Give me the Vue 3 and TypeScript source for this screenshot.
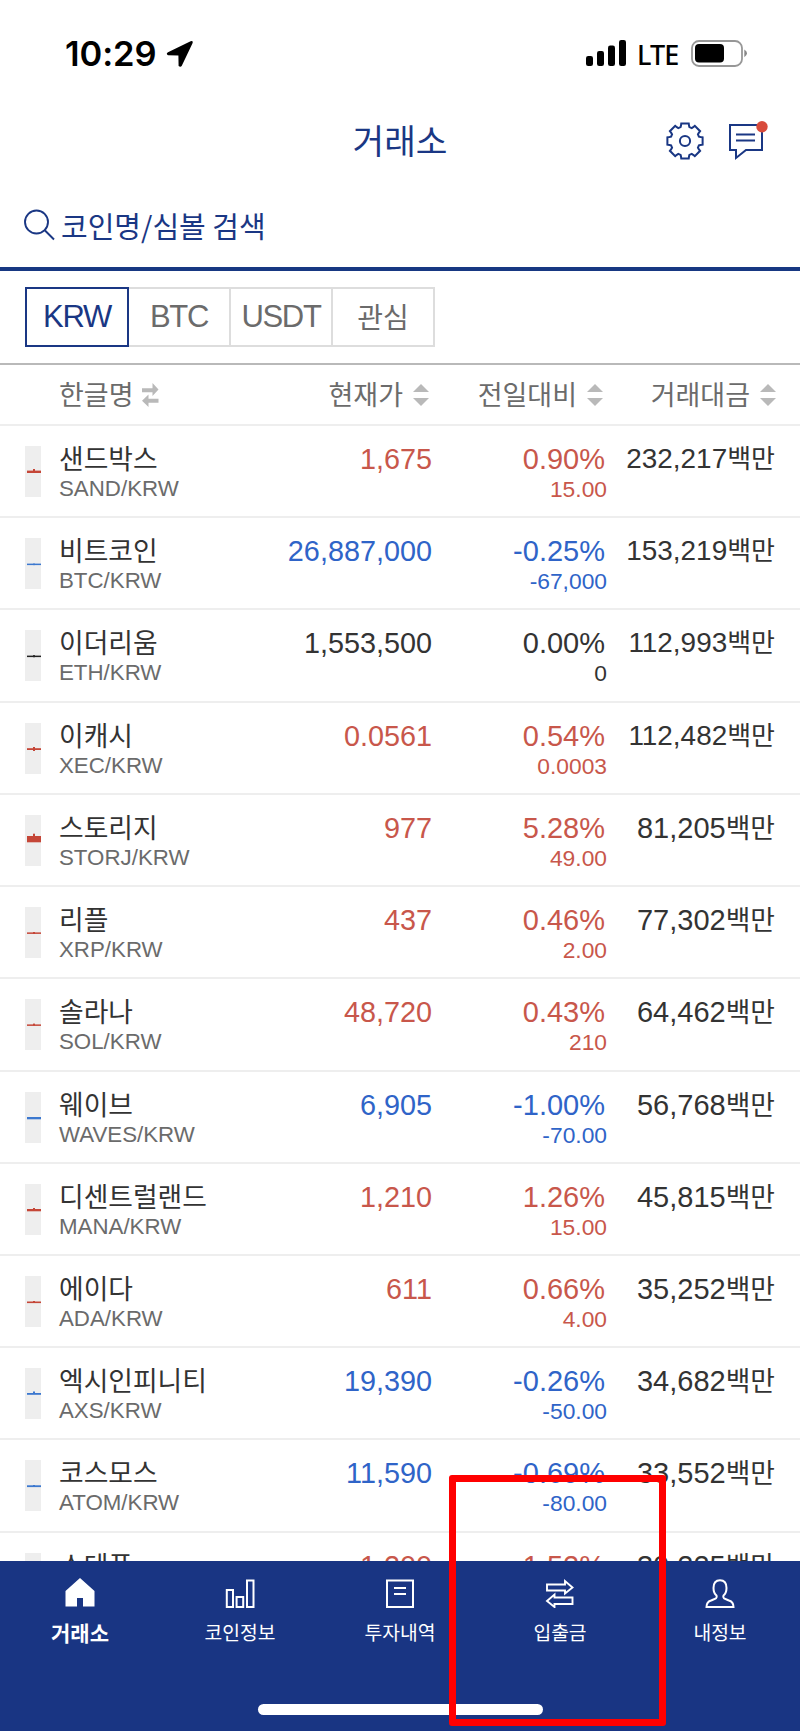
<script setup lang="ts">
type Trend = 'up' | 'down' | 'flat'

interface Coin {
  name: string
  symbol: string
  price: string
  rate: string
  diff: string
  volume: string
  trend: Trend
  // body top, body height, wick top, wick height
  candle: [number, number, number, number]
}

const coins: Coin[] = [
  { name: '샌드박스', symbol: 'SAND', price: '1,675', rate: '0.90%', diff: '15.00', volume: '232,217', trend: 'up', candle: [24.6, 2.4, 23, 2] },
  { name: '비트코인', symbol: 'BTC', price: '26,887,000', rate: '-0.25%', diff: '-67,000', volume: '153,219', trend: 'down', candle: [25.6, 1.5, 25.6, 1.5] },
  { name: '이더리움', symbol: 'ETH', price: '1,553,500', rate: '0.00%', diff: '0', volume: '112,993', trend: 'flat', candle: [25.6, 1.5, 25.2, 2] },
  { name: '이캐시', symbol: 'XEC', price: '0.0561', rate: '0.54%', diff: '0.0003', volume: '112,482', trend: 'up', candle: [25.2, 1.8, 24, 4] },
  { name: '스토리지', symbol: 'STORJ', price: '977', rate: '5.28%', diff: '49.00', volume: '81,205', trend: 'up', candle: [21, 6.3, 18.7, 3] },
  { name: '리플', symbol: 'XRP', price: '437', rate: '0.46%', diff: '2.00', volume: '77,302', trend: 'up', candle: [25.4, 1.5, 25, 2] },
  { name: '솔라나', symbol: 'SOL', price: '48,720', rate: '0.43%', diff: '210', volume: '64,462', trend: 'up', candle: [25.4, 1.5, 24.6, 2] },
  { name: '웨이브', symbol: 'WAVES', price: '6,905', rate: '-1.00%', diff: '-70.00', volume: '56,768', trend: 'down', candle: [25, 2.3, 25, 2] },
  { name: '디센트럴랜드', symbol: 'MANA', price: '1,210', rate: '1.26%', diff: '15.00', volume: '45,815', trend: 'up', candle: [25, 2.3, 24, 2] },
  { name: '에이다', symbol: 'ADA', price: '611', rate: '0.66%', diff: '4.00', volume: '35,252', trend: 'up', candle: [25.5, 1.6, 25, 2] },
  { name: '엑시인피니티', symbol: 'AXS', price: '19,390', rate: '-0.26%', diff: '-50.00', volume: '34,682', trend: 'down', candle: [25, 1.8, 23.5, 2] },
  { name: '코스모스', symbol: 'ATOM', price: '11,590', rate: '-0.69%', diff: '-80.00', volume: '33,552', trend: 'down', candle: [25.3, 1.8, 25, 2] },
  { name: '스테픈', symbol: 'GMT', price: '1,200', rate: '1.52%', diff: '18.00', volume: '30,225', trend: 'up', candle: [25, 2, 24, 2] },
]

const tabs = ['KRW', 'BTC', 'USDT', '관심']
const columns = [
  { key: 'price', label: '현재가' },
  { key: 'rate', label: '전일대비' },
  { key: 'volume', label: '거래대금' },
]
const navItems = [
  { icon: 'home', label: '거래소' },
  { icon: 'chart', label: '코인정보' },
  { icon: 'doc', label: '투자내역' },
  { icon: 'transfer', label: '입출금' },
  { icon: 'user', label: '내정보' },
]

const tooth = (angle: number): string => {
  const point = (radius: number, offset: number): string => {
    const a = ((angle + offset) * Math.PI) / 180
    return `${(19 + radius * Math.sin(a)).toFixed(2)} ${(19 - radius * Math.cos(a)).toFixed(2)}`
  }
  return `${point(14.6, -17.5)} L${point(16, -14.5)} L${point(18, -12)} L${point(18, 12)} L${point(16, 14.5)} L${point(14.6, 17.5)}`
}
const gearPath = `M${[0, 45, 90, 135, 180, 225, 270, 315].map(tooth).join(' L')} Z`
</script>

<template>
  <div class="screen">
    <div class="status">
      <span class="time">10:29</span>
      <svg class="location" width="28" height="28" viewBox="0 0 28 28">
        <path d="M2 12.2 24.6 1.2Q27.6.4 26.4 3.6L15.8 25.8Q14.6 27.6 12.6 26L12.4 15.6 2 15.2Q-.4 14 2 12.2Z" fill="#000" />
      </svg>
      <svg class="signal" width="41" height="27" viewBox="0 0 41 27">
        <rect x="0" y="16" width="7" height="10" rx="2.2" />
        <rect x="11" y="11" width="7" height="15" rx="2.2" />
        <rect x="22" y="5.5" width="7" height="20.500" rx="2.2" />
        <rect x="33" y="0" width="7" height="26" rx="2.2" />
      </svg>
      <span class="lte">LTE</span>
      <svg class="battery" width="58" height="27" viewBox="0 0 58 27">
        <rect x="1" y="1" width="50" height="25" rx="7" fill="none" stroke="#979797" stroke-width="1.8" />
        <rect x="4" y="4" width="29" height="18.500" rx="4" />
        <path d="M53.300 9.500Q56 11 56 13.300T53.300 17.200Z" fill="#888" />
      </svg>
    </div>

    <header class="top">
      <h1>거래소</h1>
      <div class="actions">
        <svg width="38" height="38" viewBox="0 0 38 38" fill="none" stroke="#1a3784" stroke-width="2">
          <path :d="gearPath" />
          <circle cx="19" cy="19" r="5.100" />
        </svg>
        <svg width="40" height="40" viewBox="0 0 40 40" fill="none" stroke="#1a3784" stroke-width="2">
          <path d="M2 4H34V29H18L8 37V29H2Z" />
          <path d="M8 13.500H27M8 19.500H27" />
          <circle cx="34" cy="5.800" r="5.700" fill="#d84b3c" stroke="none" />
        </svg>
      </div>
    </header>

    <div class="search">
      <svg width="32" height="32" viewBox="0 0 32 32" fill="none" stroke="#1a3784" stroke-width="1.9">
        <circle cx="12.500" cy="13" r="11.500" />
        <path d="M20.500 21 30 30.500" />
      </svg>
      <span>코인명/심볼 검색</span>
    </div>

    <div class="tabs">
      <div v-for="(tab, i) in tabs" :key="tab" class="tab" :class="{ active: i === 0 }"><span>{{ tab }}</span></div>
    </div>

    <div class="row thead">
      <div class="label korean">
        <span>한글명</span>
        <svg width="17" height="24" viewBox="0 0 17 24" fill="#b9b9b9">
          <path d="M0 5.200H10.500V0L16.500 6.500 10.500 13V9.200H0ZM16.500 15.800H6.500V11.500L0 17.800 6.500 24V19.800H16.500Z" />
        </svg>
      </div>
      <div v-for="col in columns" :key="col.key" class="label" :class="col.key">
        <span>{{ col.label }}</span>
        <svg width="16" height="22" viewBox="0 0 16 22" fill="#b9b9b9"><path d="M0 8 8 0 16 8ZM0 14H16L8 22Z" /></svg>
      </div>
    </div>

    <main class="list">
      <div v-for="coin in coins" :key="coin.symbol" class="row coin" :class="coin.trend">
        <svg class="candle" width="16" height="51" viewBox="0 0 16 51">
          <rect width="16" height="51" fill="#eee" />
          <rect x="2" :y="coin.candle[0]" width="14" :height="coin.candle[1]" />
          <rect x="8" :y="coin.candle[2]" width="2" :height="coin.candle[3]" />
        </svg>
        <div class="name"><strong>{{ coin.name }}</strong><small>{{ coin.symbol }}/KRW</small></div>
        <div class="price">{{ coin.price }}</div>
        <div class="rate"><b>{{ coin.rate }}</b><small>{{ coin.diff }}</small></div>
        <div class="volume" :class="{ tight: coin.volume.length > 6 }">{{ coin.volume }}<span>백만</span></div>
      </div>
    </main>

    <nav class="nav">
      <div v-for="(item, i) in navItems" :key="item.icon" class="item" :class="{ current: i === 0 }">
        <svg width="30" height="30" viewBox="0 0 30 30" fill="none" stroke="#fff" stroke-width="2">
          <path v-if="item.icon === 'home'" d="M15 0 29.500 13V28.500H18V20H12V28.500H.500V13Z" fill="#fff" stroke="none" />
          <path v-else-if="item.icon === 'chart'" d="M1.800 12H8V29H1.800ZM11.600 19H18.200V29H11.600ZM22 2.500H28.500V29H22Z" />
          <path v-else-if="item.icon === 'doc'" d="M2 2.500H28V29H2ZM9 10H21M9 16H21" />
          <path v-else-if="item.icon === 'transfer'" d="M2 6.500H20V3L27.500 9.500 20 15.500V12.500H2ZM27.500 19.500H9.500V16.500L2 23 9.500 29V26H27.500Z" stroke-width="1.900" />
          <path v-else d="M15 2.200C10.500 2.200 8.500 5.500 8.500 10 8.500 13.500 9.500 15.800 11.500 17.500 12.800 20.500 9.500 21 6 22.500 3 23.500 1.500 25.500 1.500 29H28.500C28.500 25.500 27 23.500 24 22.500 20.500 21 17.200 20.500 18.500 17.500 20.500 15.800 21.500 13.500 21.500 10 21.500 5.500 19.500 2.200 15 2.200Z" />
        </svg>
        <span>{{ item.label }}</span>
      </div>
      <div class="indicator"></div>
    </nav>
    <div class="highlight"></div>
  </div>
</template>

<style>
body {
  margin: 0;
}
</style>

<style scoped>
.screen {
  position: relative;
  box-sizing: border-box;
  width: 800px;
  height: 1731px;
  overflow: hidden;
  display: flex;
  flex-direction: column;
  background: #fff;
  color: #333;
  font-family: "Liberation Sans", "Noto Sans CJK KR", sans-serif;
}
svg {
  display: block;
  flex: none;
}
.status {
  height: 100px;
  box-sizing: border-box;
  padding: 7px 51px 0 65px;
  display: flex;
  align-items: center;
  flex: none;
  color: #000;
}
.time {
  width: 101px;
  font: 600 34.500px/40px Inter, sans-serif;
  letter-spacing: -0.1px;
}
.signal {
  margin-left: auto;
}
.lte {
  margin: 2px 0 0 10.500px;
  width: 54px;
  font: 500 27px/32px "Noto Sans", sans-serif;
  letter-spacing: -0.900px;
}
.top {
  height: 82px;
  flex: none;
  display: grid;
  grid-template-columns: 1fr auto 1fr;
  align-items: center;
  color: #1a3784;
}
h1 {
  grid-column: 2;
  margin: 0;
  padding-bottom: 4px;
  font: 400 34.400px/50px "Noto Sans CJK KR", sans-serif;
}
.actions {
  display: flex;
  gap: 24px;
  justify-self: end;
  align-items: center;
  padding-right: 32px;
}
.search {
  height: 89px;
  box-sizing: border-box;
  flex: none;
  border-bottom: 4px solid #173882;
  padding: 0 24px;
  display: flex;
  align-items: center;
  gap: 5px;
  color: #1a3784;
  font: 400 29px/40px "Noto Sans CJK KR", sans-serif;
}
.tabs {
  height: 94px;
  box-sizing: border-box;
  flex: none;
  border-bottom: 2px solid #b9b9b9;
  padding: 16px 25px;
  display: flex;
}
.tab {
  width: 102px;
  height: 60px;
  box-sizing: border-box;
  border: 2px solid #ddd;
  border-left: 0;
  display: flex;
  align-items: center;
  justify-content: center;
  font-size: 31px;
  letter-spacing: -1.300px;
  color: #6b6b6b;
}
.tab:last-child {
  font-size: 28px;
  letter-spacing: 0;
  padding-bottom: 3px;
}
.tab.active {
  width: 104px;
  border: 2px solid #1a3784;
  color: #1a3784;
}
.row {
  display: grid;
  grid-template-columns: 34px 200px 173px 175px 168px;
  padding: 0 25px;
  box-sizing: border-box;
  border-bottom: 2px solid #eee;
  flex: none;
}
.thead {
  height: 61px;
  display: flex;
  align-items: center;
  padding: 0 24px 0 59px;
  font: 400 27px/40px "Noto Sans CJK KR", sans-serif;
  color: #6b6b6b;
}
.label {
  display: flex;
  align-items: center;
  gap: 10px;
}
.label span {
  padding-bottom: 2px;
}
.label.korean {
  gap: 8px;
}
.label.price {
  margin-left: auto;
}
.label.rate {
  width: 174px;
  justify-content: flex-end;
}
.label.volume {
  width: 173px;
  justify-content: flex-end;
}
.list {
  flex: 1;
  min-height: 0;
  overflow: hidden;
}
.coin {
  height: 92.220px;
}
.candle {
  margin-top: 20px;
}
.name {
  display: flex;
  flex-direction: column;
  padding-top: 13px;
}
.name strong {
  font: 400 26.800px/38px "Noto Sans CJK KR", sans-serif;
  color: #333;
}
small {
  font-size: 22.800px;
  line-height: 24px;
}
.name small {
  font-size: 22.300px;
  color: #6b6b6b;
}
.price,
.rate {
  text-align: right;
  font-size: 29px;
  line-height: 34px;
  padding-top: 16px;
}
.coin .price {
  font-size: 28.800px;
}
.thead .label {
  padding-top: 0;
  font: inherit;
}
.rate {
  display: flex;
  flex-direction: column;
}
.thead .rate {
  flex-direction: row;
}
.coin .rate b {
  font-weight: 400;
  padding-right: 2px;
}
.coin .rate small {
  margin-top: 1px;
}
.volume {
  text-align: right;
  font-size: 29px;
  line-height: 34px;
  padding-top: 16px;
  white-space: nowrap;
}
.coin .volume span {
  font: 400 26.800px/30px "Noto Sans CJK KR", sans-serif;
}
.coin .volume.tight {
  font-size: 27.900px;
}
.coin .volume.tight span {
  font-size: 26px;
}
.up .price,
.up .rate {
  color: #c8574b;
}
.down .price,
.down .rate {
  color: #2f64c8;
}
.up .candle {
  fill: #c54637;
}
.down .candle {
  fill: #3c78cf;
}
.flat .candle {
  fill: #222;
}
.nav {
  height: 170.500px;
  flex: none;
  display: grid;
  grid-template-columns: repeat(5, 160px);
  grid-template-rows: 142px auto;
  background: #193583;
  color: #fff;
  justify-items: center;
}
.item {
  display: flex;
  flex-direction: column;
  align-items: center;
  padding-top: 17px;
  gap: 9px;
  font: 400 19.300px/30px "Noto Sans CJK KR", sans-serif;
}
.current {
  font-weight: 700;
  font-size: 21px;
}
.indicator {
  grid-column: 1 / -1;
  width: 285px;
  height: 11px;
  border-radius: 6px;
  background: #fff;
  margin-top: 1.500px;
}
.highlight {
  position: absolute;
  left: 449px;
  top: 1475px;
  width: 217px;
  height: 250.500px;
  box-sizing: border-box;
  border: 7px solid #f00;
  border-radius: 3px;
}
</style>
